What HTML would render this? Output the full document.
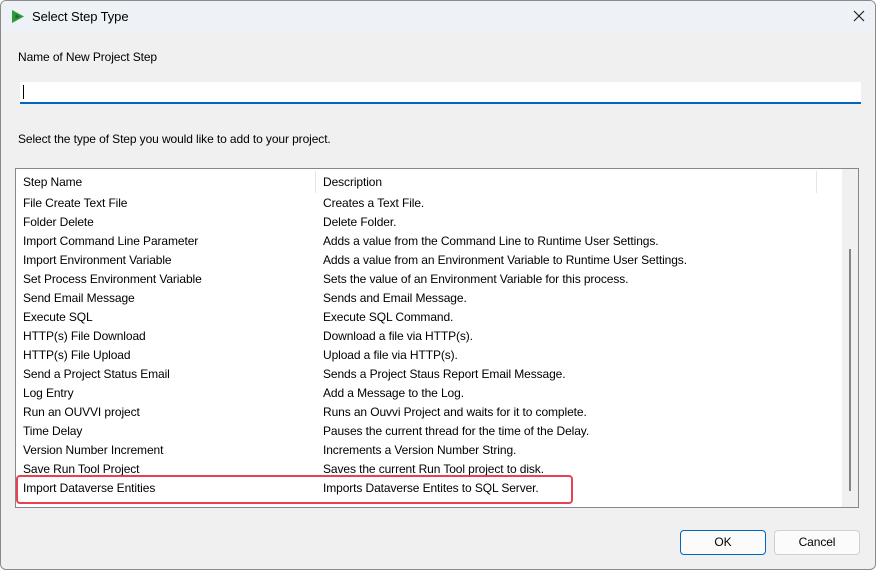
<!DOCTYPE html>
<html><head><style>
body{margin:0;width:876px;height:570px;overflow:hidden;background:#fff;font-family:"Liberation Sans",sans-serif;font-size:12px;color:#000;letter-spacing:-0.1px}
.win{position:absolute;left:0;top:0;width:874px;height:568px;border:1px solid #8a8a8a;border-radius:6px;background:#f0f0f0;overflow:hidden}
.title{position:absolute;left:0;top:0;width:874px;height:31px;background:#eef2f7}
.abs{position:absolute;white-space:nowrap}
.list{position:absolute;left:14px;top:167px;width:842px;height:338px;border:1px solid #828790;background:#fff}
.row{position:absolute;left:7px;height:19px;line-height:19px}
.btn{position:absolute;top:529px;width:84px;height:23px;border:1px solid #d0d0d0;border-radius:4px;background:#fbfbfb;text-align:center;line-height:23px;font-size:12px}
</style></head><body>
<div class="win">
<div class="title">
<svg class="abs" style="left:9px;top:8px" width="15" height="15" viewBox="0 0 15 15"><path d="M2 1 L14 7.5 L2 14 Z" fill="#2e9a3e"/><path d="M5.5 5 L10 7.5 L5.5 10 Z" fill="#1b6e2a"/></svg>
<div class="abs" style="left:31px;top:8px;font-size:13px">Select Step Type</div>
<svg class="abs" style="left:852px;top:9px" width="12" height="12"><path d="M1 1L11 11M11 1L1 11" stroke="#222" stroke-width="1.2"/></svg>
</div>
<div class="abs" style="left:17px;top:49px">Name of New Project Step</div>
<div class="abs" style="left:19px;top:81px;width:841px;height:20px;background:#fff;border-bottom:2px solid #0067c0"></div>
<div class="abs" style="left:22px;top:84px;width:1px;height:14px;background:#000"></div>
<div class="abs" style="left:17px;top:131px">Select the type of Step you would like to add to your project.</div>
<div class="list">
<div class="abs" style="left:299px;top:2px;width:1px;height:22px;background:#e5e5e5"></div>
<div class="abs" style="left:800px;top:2px;width:1px;height:22px;background:#e5e5e5"></div>
<div class="row" style="top:4px">Step Name</div><div class="row" style="top:4px;left:307px">Description</div>
<div class="abs" style="left:826px;top:0;width:16px;height:338px;background:#f0f0f0"></div>
<div class="abs" style="left:833px;top:80px;width:2px;height:242px;background:#858585"></div>
<div style="position:absolute;left:0;top:25px;width:826px">
<div class="row" style="top:0">File Create Text File</div><div class="row" style="top:0;left:307px">Creates a Text File.</div>
<div class="row" style="top:19px">Folder Delete</div><div class="row" style="top:19px;left:307px">Delete Folder.</div>
<div class="row" style="top:38px">Import Command Line Parameter</div><div class="row" style="top:38px;left:307px">Adds a value from the Command Line to Runtime User Settings.</div>
<div class="row" style="top:57px">Import Environment Variable</div><div class="row" style="top:57px;left:307px">Adds a value from an Environment Variable to Runtime User Settings.</div>
<div class="row" style="top:76px">Set Process Environment Variable</div><div class="row" style="top:76px;left:307px">Sets the value of an Environment Variable for this process.</div>
<div class="row" style="top:95px">Send Email Message</div><div class="row" style="top:95px;left:307px">Sends and Email Message.</div>
<div class="row" style="top:114px">Execute SQL</div><div class="row" style="top:114px;left:307px">Execute SQL Command.</div>
<div class="row" style="top:133px">HTTP(s) File Download</div><div class="row" style="top:133px;left:307px">Download a file via HTTP(s).</div>
<div class="row" style="top:152px">HTTP(s) File Upload</div><div class="row" style="top:152px;left:307px">Upload a file via HTTP(s).</div>
<div class="row" style="top:171px">Send a Project Status Email</div><div class="row" style="top:171px;left:307px">Sends a Project Staus Report Email Message.</div>
<div class="row" style="top:190px">Log Entry</div><div class="row" style="top:190px;left:307px">Add a Message to the Log.</div>
<div class="row" style="top:209px">Run an OUVVI project</div><div class="row" style="top:209px;left:307px">Runs an Ouvvi Project and waits for it to complete.</div>
<div class="row" style="top:228px">Time Delay</div><div class="row" style="top:228px;left:307px">Pauses the current thread for the time of the Delay.</div>
<div class="row" style="top:247px">Version Number Increment</div><div class="row" style="top:247px;left:307px">Increments a Version Number String.</div>
<div class="row" style="top:266px">Save Run Tool Project</div><div class="row" style="top:266px;left:307px">Saves the current Run Tool project to disk.</div>
<div class="row" style="top:285px">Import Dataverse Entities</div><div class="row" style="top:285px;left:307px">Imports Dataverse Entites to SQL Server.</div>
</div>
</div>
<div class="abs" style="left:15px;top:474px;width:553px;height:25px;border:2px solid #e8424f;border-radius:4px"></div>
<div class="btn" style="left:679px;border-color:#0067c0">OK</div>
<div class="btn" style="left:773px">Cancel</div>
</div>
</body></html>
